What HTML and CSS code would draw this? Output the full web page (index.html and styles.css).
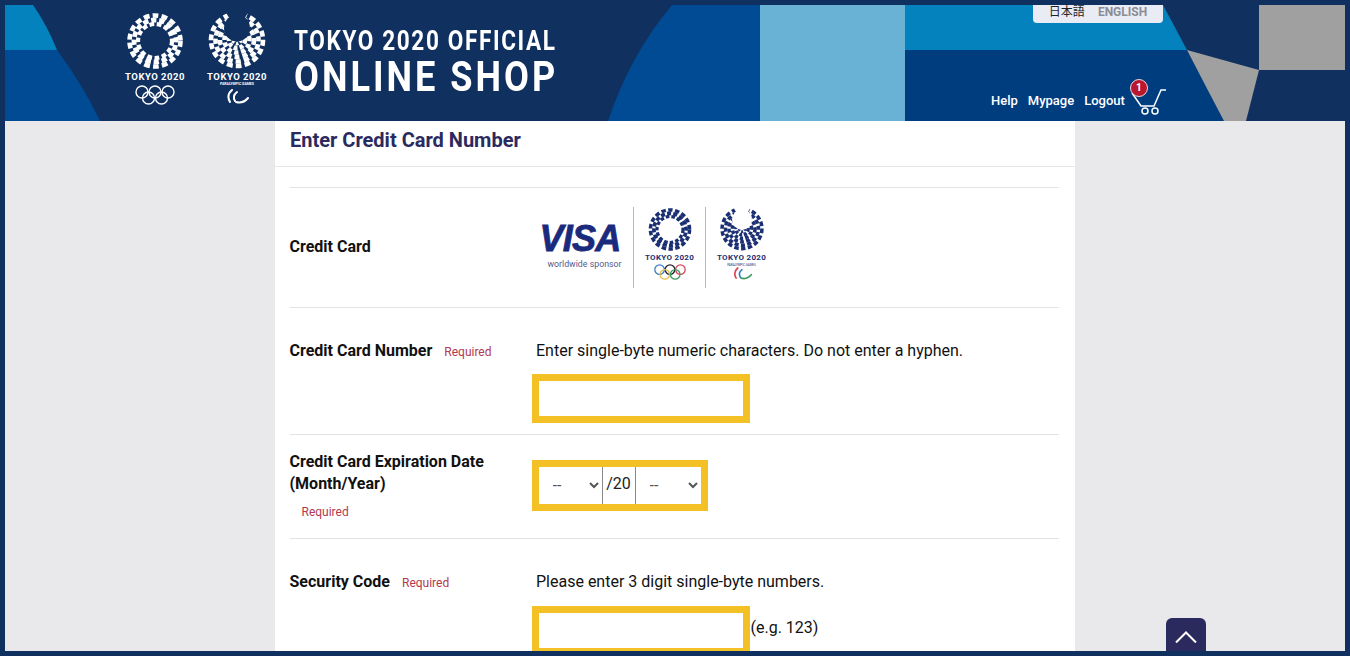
FILE: index.html
```html
<!DOCTYPE html>
<html lang="en">
<head>
    <meta charset="UTF-8" />
    <meta name="viewport" content="width=device-width, initial-scale=1.0"/>
    <title>Enter Credit Card Number | Tokyo 2020 Official Online Shop</title>
    <link rel="stylesheet" href="styles.css">
</head>
<body>
<svg class="defs" width="0" height="0" aria-hidden="true">
    <defs>
        <mask id="paraCut" maskUnits="userSpaceOnUse" x="0" y="0" width="60" height="56">
            <rect width="60" height="56" fill="#fff"/>
            <ellipse cx="30" cy="15" rx="13" ry="13.5" fill="#000"/>
            <path d="M18 -2 L30 18 L42 -2 Z" fill="#000"/>
        </mask>
        <symbol id="olyRing" viewBox="0 0 60 56">
            <g fill="none" stroke="currentColor">
                <circle cx="30" cy="28" r="25.5" stroke-width="4.6" stroke-dasharray="5.8 3.2"/>
                <circle cx="30" cy="28" r="21" stroke-width="4.8" stroke-dasharray="5.4 2.8" stroke-dashoffset="4"/>
                <circle cx="30" cy="28" r="17" stroke-width="4.2" stroke-dasharray="4.8 2.6"/>
            </g>
        </symbol>
        <symbol id="paraRing" viewBox="0 0 60 56">
            <g fill="none" stroke="currentColor" mask="url(#paraCut)">
                <circle cx="30" cy="27" r="26" stroke-width="4.6" stroke-dasharray="5.8 3.2"/>
                <circle cx="30" cy="27" r="21.5" stroke-width="4.6" stroke-dasharray="5.4 3" stroke-dashoffset="4"/>
                <circle cx="30" cy="27" r="17" stroke-width="4.6" stroke-dasharray="5 3"/>
                <circle cx="30" cy="27" r="12.5" stroke-width="4.6" stroke-dasharray="4.4 2.6" stroke-dashoffset="3"/>
                <circle cx="30" cy="27" r="8" stroke-width="4.6" stroke-dasharray="3.8 2.2"/>
                <circle cx="30" cy="27" r="3.5" stroke-width="4" stroke-dasharray="2.4 1.6"/>
            </g>
        </symbol>
    </defs>
</svg>

<div class="frame">
    <header class="top">
        <!-- colour blocks behind the header -->
        <svg class="top-shapes" width="1340" height="116" viewBox="0 0 1340 116" aria-hidden="true">
            <path d="M0 0 H28 Q42 20 52 45 H0 Z" fill="#0482bd"/>
            <path d="M0 45 H52 Q78 80 95 116 H0 Z" fill="#004b93"/>
            <path d="M667 0 H755 V116 H603 Q625 50 667 0 Z" fill="#004b93"/>
            <rect x="755" width="145" height="116" fill="#6ab2d5"/>
            <path d="M900 0 H1158 L1182 45 H900 Z" fill="#0482bd"/>
            <path d="M900 45 H1182 Q1200 80 1219 116 H900 Z" fill="#003d7f"/>
            <path d="M1182 45 L1254 65 L1241 116 H1219 Q1200 80 1182 45 Z" fill="#a0a0a0"/>
            <rect x="1254" width="86" height="65" fill="#a0a0a0"/>
        </svg>

        <div class="emblems">
            <div class="emblem">
                <svg class="emblem-mark" width="60" height="56"><use href="#olyRing"/></svg>
                <span class="emblem-name">TOKYO 2020</span>
                <svg class="rings" width="42" height="20" viewBox="0 0 42 20" fill="none" stroke="#fff" stroke-width="1.4">
                    <circle cx="8" cy="7" r="6"/><circle cx="21" cy="7" r="6"/><circle cx="34" cy="7" r="6"/>
                    <circle cx="14.5" cy="13" r="6"/><circle cx="27.5" cy="13" r="6"/>
                </svg>
            </div>
            <div class="emblem">
                <svg class="emblem-mark" width="60" height="56"><use href="#paraRing"/></svg>
                <span class="emblem-name">TOKYO 2020</span>
                <span class="emblem-sub">PARALYMPIC GAMES</span>
                <svg class="agitos" width="26" height="15" viewBox="0 0 26 15" fill="none" stroke="#fff" stroke-width="2" stroke-linecap="round">
                    <path d="M8 1 Q2 6 6 13"/><path d="M13 3 Q8 7 11 12"/><path d="M12 13 Q19 15 24 9"/>
                </svg>
            </div>
        </div>

        <div class="shop-title">
            <div class="shop-line1">TOKYO 2020 OFFICIAL</div>
            <div class="shop-line2">ONLINE SHOP</div>
        </div>

        <div class="lang">
            <span class="lang-ja">日本語</span>
            <span class="lang-en">ENGLISH</span>
        </div>

        <nav class="user-nav">
            <a href="#">Help</a>
            <a href="#">Mypage</a>
            <a href="#">Logout</a>
            <span class="cart">
                <svg width="42" height="40" viewBox="0 0 42 40" fill="none" stroke="#fff" stroke-width="1.5">
                    <path d="M2 16 L11 29 H24 L31 13 H36"/>
                    <circle cx="15" cy="34" r="3"/><circle cx="25" cy="34" r="3"/>
                </svg>
                <span class="cart-count">1</span>
            </span>
        </nav>
    </header>

    <main class="page">
        <section class="panel">
            <h1 class="panel-title">Enter Credit Card Number</h1>
            <div class="panel-body">

                <div class="row row-card">
                    <div class="row-label"><b>Credit Card</b></div>
                    <div class="sponsor">
                        <div class="visa">
                            <span class="visa-name">VISA</span>
                            <span class="visa-sub">worldwide sponsor</span>
                        </div>
                        <div class="sponsor-emblem">
                            <svg width="46" height="43"><use href="#olyRing"/></svg>
                            <span class="sponsor-name">TOKYO 2020</span>
                            <svg class="sponsor-rings" width="34" height="16" viewBox="0 0 42 20" fill="none" stroke-width="1.6">
                                <circle cx="8" cy="7" r="6" stroke="#3c7fc4"/><circle cx="21" cy="7" r="6" stroke="#222"/><circle cx="34" cy="7" r="6" stroke="#d9465a"/>
                                <circle cx="14.5" cy="13" r="6" stroke="#e8bf4e"/><circle cx="27.5" cy="13" r="6" stroke="#3f9a62"/>
                            </svg>
                        </div>
                        <div class="sponsor-emblem">
                            <svg width="46" height="43"><use href="#paraRing"/></svg>
                            <span class="sponsor-name">TOKYO 2020</span>
                            <span class="sponsor-sub">PARALYMPIC GAMES</span>
                            <svg width="22" height="13" viewBox="0 0 26 15" fill="none" stroke-width="2" stroke-linecap="round">
                                <path d="M8 1 Q2 6 6 13" stroke="#d9465a"/><path d="M13 3 Q8 7 11 12" stroke="#3c7fc4"/><path d="M12 13 Q19 15 24 9" stroke="#3f9a62"/>
                            </svg>
                        </div>
                    </div>
                </div>

                <div class="row row-number">
                    <div class="row-label"><b>Credit Card Number</b><span class="required">Required</span></div>
                    <div class="row-value">
                        <p class="hint">Enter single-byte numeric characters. Do not enter a hyphen.</p>
                        <input class="field" type="text">
                    </div>
                </div>

                <div class="row row-expiry">
                    <div class="row-label">
                        <b>Credit Card Expiration Date<br>(Month/Year)</b>
                        <span class="required required-block">Required</span>
                    </div>
                    <div class="expiry">
                        <select class="expiry-select"><option>--</option></select>
                        <span class="expiry-prefix">/20</span>
                        <select class="expiry-select expiry-year"><option>--</option></select>
                    </div>
                </div>

                <div class="row row-code">
                    <div class="row-label"><b>Security Code</b><span class="required">Required</span></div>
                    <div class="row-value">
                        <p class="hint">Please enter 3 digit single-byte numbers.</p>
                        <div class="code-line">
                            <input class="field" type="text">
                            <span class="example">(e.g. 123)</span>
                        </div>
                    </div>
                </div>

            </div>
        </section>
    </main>

    <a class="to-top" href="#" aria-label="Back to top">
        <svg width="22" height="12" viewBox="0 0 22 12" fill="none" stroke="#fff" stroke-width="2"><path d="M1 11.5 L11 1.5 L21 11.5"/></svg>
    </a>
</div>
</body>
</html>
```

FILE: styles.css
```css
html, body {
    margin: 0;
    height: 100%;
    overflow: hidden;
}

body {
    font-family: Roboto, "Liberation Sans", "Noto Sans CJK JP", sans-serif;
    font-size: 16px;
    color: #111;
}

.defs {
    position: absolute;
}

.frame {
    position: relative;
    box-sizing: border-box;
    height: 656px;
    border: 5px solid #10305f;
    overflow: hidden;
    background-color: #e9e9eb;
}

/* header */
.top {
    position: relative;
    display: flex;
    height: 116px;
    background-color: #10305f;
    color: white;
}

.top-shapes {
    position: absolute;
    top: 0;
    left: 0;
}

.emblems {
    position: relative;
    display: flex;
    gap: 22px;
    margin: 8px 0 0 120px;
}

.emblem {
    display: flex;
    flex-direction: column;
    align-items: center;
    width: 60px;
}

.emblem-name {
    margin-top: 2px;
    font-size: 9.5px;
    line-height: 11px;
    font-weight: 700;
    letter-spacing: 0.5px;
    white-space: nowrap;
}

.emblem-sub {
    font-size: 3.5px;
    line-height: 4px;
    font-weight: 700;
    white-space: nowrap;
}

.rings {
    margin-top: 3px;
}

.agitos {
    margin-top: 3px;
}

.shop-title {
    position: relative;
    margin: 21px 0 0 27px;
}

.shop-line1 {
    font-size: 27.5px;
    line-height: 30px;
    font-weight: 700;
    letter-spacing: 2px;
    white-space: nowrap;
    transform: scaleX(0.82);
    transform-origin: left center;
}

.shop-line2 {
    margin-top: -1px;
    font-size: 42px;
    line-height: 44px;
    font-weight: 700;
    letter-spacing: 3.5px;
    white-space: nowrap;
    transform: scaleX(0.86);
    transform-origin: left center;
}

.lang {
    position: absolute;
    top: 0;
    left: 1028px;
    display: flex;
    justify-content: center;
    gap: 13px;
    box-sizing: border-box;
    width: 130px;
    height: 18px;
    background-color: #e9ecf5;
    border-radius: 0 0 4px 4px;
    font-size: 12px;
    line-height: 14px;
}

.lang-ja {
    color: #222;
}

.lang-en {
    color: #8b8d94;
    font-weight: 700;
}

.user-nav {
    position: absolute;
    top: 72px;
    left: 986px;
    display: flex;
    gap: 10px;
    font-size: 13px;
    font-weight: 500;
    line-height: 48px;
}

.user-nav a {
    color: white;
    text-decoration: none;
    line-height: 48px;
}

.cart {
    position: relative;
    width: 42px;
    height: 40px;
    margin-left: -5px;
}

.cart-count {
    position: absolute;
    top: 2px;
    left: 0;
    width: 18px;
    height: 18px;
    box-sizing: border-box;
    background-color: #b8172f;
    border: 1px solid #f1d6da;
    border-radius: 50%;
    font-size: 10px;
    font-weight: 700;
    line-height: 16px;
    text-align: center;
}

/* panel */
.page {
    display: flex;
    justify-content: center;
}

.panel {
    width: 800px;
    background-color: white;
}

.panel-title {
    margin: 0;
    padding: 0 15px;
    height: 45px;
    border-bottom: 1px solid #e6e6e6;
    font-size: 20px;
    font-weight: 700;
    line-height: 38px;
    color: #2b2a5e;
}

.panel-body {
    margin: 20px 16px 0 15px;
}

.row {
    display: flex;
    border-top: 1px solid #e2e2e2;
}

.row-label {
    flex: none;
    width: 246.5px;
    margin-left: -0.5px;
}

.row-label b {
    font-weight: 700;
    line-height: 22px;
}

.required {
    margin-left: 12px;
    font-size: 12px;
    color: #b2394f;
}

.required-block {
    display: block;
    margin-top: 6px;
    line-height: 22px;
}

.hint {
    margin: 0 0 12px;
    line-height: 24px;
}

.row-number .hint {
    margin-bottom: 11px;
}

.field {
    display: block;
    box-sizing: border-box;
    width: 218px;
    height: 49px;
    margin-left: -4.5px;
    border: 7px solid #f3c026;
    background-color: white;
    outline: none;
}

.row-card {
    height: 119px;
    align-items: center;
}

.row-card .row-label {
    margin-top: -2px;
}

.row-number {
    height: 95px;
    padding-top: 31px;
}

.row-number .row-label,
.row-code .row-label {
    line-height: 24px;
}

.row-expiry {
    height: 87px;
    padding-top: 16px;
}

.row-code {
    padding-top: 31px;
}

/* sponsor logos */
.sponsor {
    display: flex;
    align-items: stretch;
    height: 81px;
}

.visa {
    display: flex;
    flex-direction: column;
    align-items: center;
    justify-content: center;
    width: 97px;
    padding-bottom: 4px;
}

.visa-name {
    margin-left: -9px;
    font-family: "Liberation Sans", Arial, sans-serif;
    font-size: 36px;
    line-height: 34px;
    font-weight: 700;
    font-style: italic;
    color: #1a2a7c;
    letter-spacing: -0.8px;
    -webkit-text-stroke: 0.8px #1a2a7c;
}

.visa-sub {
    margin-top: 3px;
    font-size: 8.8px;
    color: #555b8c;
    white-space: nowrap;
}

.sponsor-emblem {
    display: flex;
    flex-direction: column;
    align-items: center;
    width: 71px;
    padding-top: 1px;
    border-left: 1px solid #b4b8c8;
    color: #1b2f73;
}

.sponsor-name {
    font-size: 8px;
    line-height: 10px;
    font-weight: 700;
    letter-spacing: 0.3px;
    margin-top: 2px;
    white-space: nowrap;
}

.sponsor-rings {
    margin-top: 1px;
}

.sponsor-sub {
    font-size: 3px;
    line-height: 4px;
    white-space: nowrap;
}

/* expiration */
.expiry {
    display: flex;
    align-self: flex-start;
    box-sizing: border-box;
    height: 51px;
    margin: 9px 0 0 -4.5px;
    border: 7px solid #f3c026;
    background-color: white;
}

.expiry-select {
    width: 63px;
    height: 37px;
    padding-left: 10px;
    border: none;
    background-color: white;
    font-family: Roboto, sans-serif;
    font-size: 16px;
    color: #555;
    outline: none;
}

.expiry-year {
    width: 65px;
}

.expiry-prefix {
    width: 32px;
    border-left: 1px solid #8a8a8a;
    border-right: 1px solid #8a8a8a;
    line-height: 34px;
    text-align: center;
    color: #222;
}

.code-line {
    display: flex;
    align-items: center;
}

.example {
    position: relative;
    top: -3px;
    margin-left: 1px;
    white-space: nowrap;
}

.to-top {
    position: absolute;
    left: 1161px;
    bottom: 0;
    display: flex;
    justify-content: center;
    box-sizing: border-box;
    width: 40px;
    height: 33px;
    padding-top: 13px;
    background-color: #2b2a5e;
    border-radius: 6px 6px 0 0;
}
```
